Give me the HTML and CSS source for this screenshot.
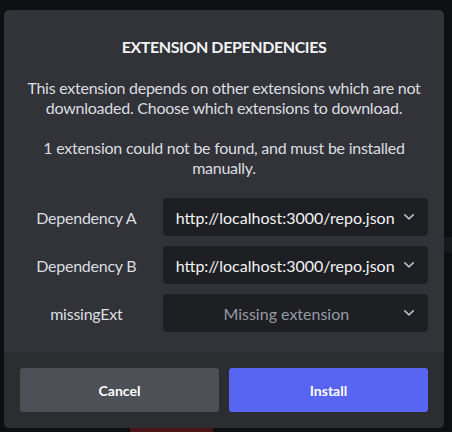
FILE: index.html
```html
<!DOCTYPE html>
<html>
<head>
<meta charset="utf-8">
<link rel="stylesheet" href="styles.css">
</head>
<body>
<div class="backdrop">
  <div class="bg-bar"></div>
  <div class="bg-band"></div>
  <div class="modal">
    <div class="modal-body">
      <h1 class="title">EXTENSION DEPENDENCIES</h1>
      <p class="text">This extension depends on other extensions which are not downloaded. Choose which extensions to download.</p>
      <p class="text">1 extension could not be found, and must be installed manually.</p>
      <div class="deps">
        <div class="label">Dependency A</div>
        <div class="select"><span class="value">http://localhost:3000/repo.json</span><svg class="chev" width="12" height="8" viewBox="0 0 12 8"><path d="M1.8 1.8 L6 5.8 L10.2 1.8" fill="none" stroke="currentColor" stroke-width="1.7" stroke-linecap="round" stroke-linejoin="round"/></svg></div>
        <div class="label">Dependency B</div>
        <div class="select"><span class="value">http://localhost:3000/repo.json</span><svg class="chev" width="12" height="8" viewBox="0 0 12 8"><path d="M1.8 1.8 L6 5.8 L10.2 1.8" fill="none" stroke="currentColor" stroke-width="1.7" stroke-linecap="round" stroke-linejoin="round"/></svg></div>
        <div class="label">missingExt</div>
        <div class="select missing"><span class="value">Missing extension</span><svg class="chev" width="12" height="8" viewBox="0 0 12 8"><path d="M1.8 1.8 L6 5.8 L10.2 1.8" fill="none" stroke="currentColor" stroke-width="1.7" stroke-linecap="round" stroke-linejoin="round"/></svg></div>
      </div>
    </div>
    <div class="modal-footer">
      <button class="btn btn-cancel">Cancel</button>
      <button class="btn btn-install">Install</button>
    </div>
  </div>
</div>
</body>
</html>
```
FILE: styles.css
```css
html, body {
  margin: 0;
  padding: 0;
}
body {
  width: 452px;
  height: 432px;
  overflow: hidden;
  background: #0e0f11;
  font-family: Lato, "Noto Sans", sans-serif;
}
.backdrop {
  position: relative;
  width: 452px;
  height: 432px;
  padding: 10px 0 0 4px;
  box-sizing: border-box;
}
.bg-bar {
  position: absolute;
  left: 130px;
  top: 428px;
  width: 83px;
  height: 4px;
  background: #4a1519;
}
.bg-band {
  position: absolute;
  left: 444px;
  top: 237px;
  width: 8px;
  height: 16px;
  background: #17181b;
}
.modal {
  position: relative;
  width: 440px;
  height: 418px;
  background: #313338;
  border-radius: 5px;
  overflow: hidden;
  display: flex;
  flex-direction: column;
}
.modal-body {
  flex: 1;
  padding: 27px 16px 0;
  display: flex;
  flex-direction: column;
}
.title {
  margin: 0;
  font-size: 16px;
  line-height: 20px;
  font-weight: 700;
  letter-spacing: -0.4px;
  color: #f2f3f5;
  text-align: center;
}
.text {
  margin: 21px 0 0;
  font-size: 16px;
  line-height: 20px;
  letter-spacing: -0.25px;
  color: #dbdee1;
  text-align: center;
}
.text + .text {
  margin-top: 20px;
}
.deps {
  margin-top: 20px;
  display: grid;
  grid-template-columns: 1fr 2fr;
  column-gap: 10px;
  row-gap: 10px;
}
.label {
  display: flex;
  align-items: center;
  justify-content: center;
  font-size: 16px;
  letter-spacing: -0.25px;
  color: #dbdee1;
}
.select {
  height: 38px;
  background: #1e1f22;
  border-radius: 4px;
  display: flex;
  align-items: center;
  padding: 0 13px 0 13px;
  font-size: 16px;
  color: #f2f3f5;
}
.select .value {
  flex: 1;
  white-space: nowrap;
  overflow: hidden;
}
.select.missing .value {
  text-align: center;
  color: #949ba4;
}
.chev {
  color: #b5bac1;
  margin-left: 6px;
  flex: none;
}
.modal-footer {
  height: 76px;
  box-sizing: border-box;
  background: #2b2d31;
  padding: 16px;
  display: flex;
  gap: 10px;
}
.btn {
  flex: 1;
  border: none;
  border-radius: 3px;
  font-family: inherit;
  font-size: 14px;
  font-weight: 700;
  color: #ffffff;
}
.btn-cancel {
  background: #4e5058;
}
.btn-install {
  background: #5865f2;
}
```
